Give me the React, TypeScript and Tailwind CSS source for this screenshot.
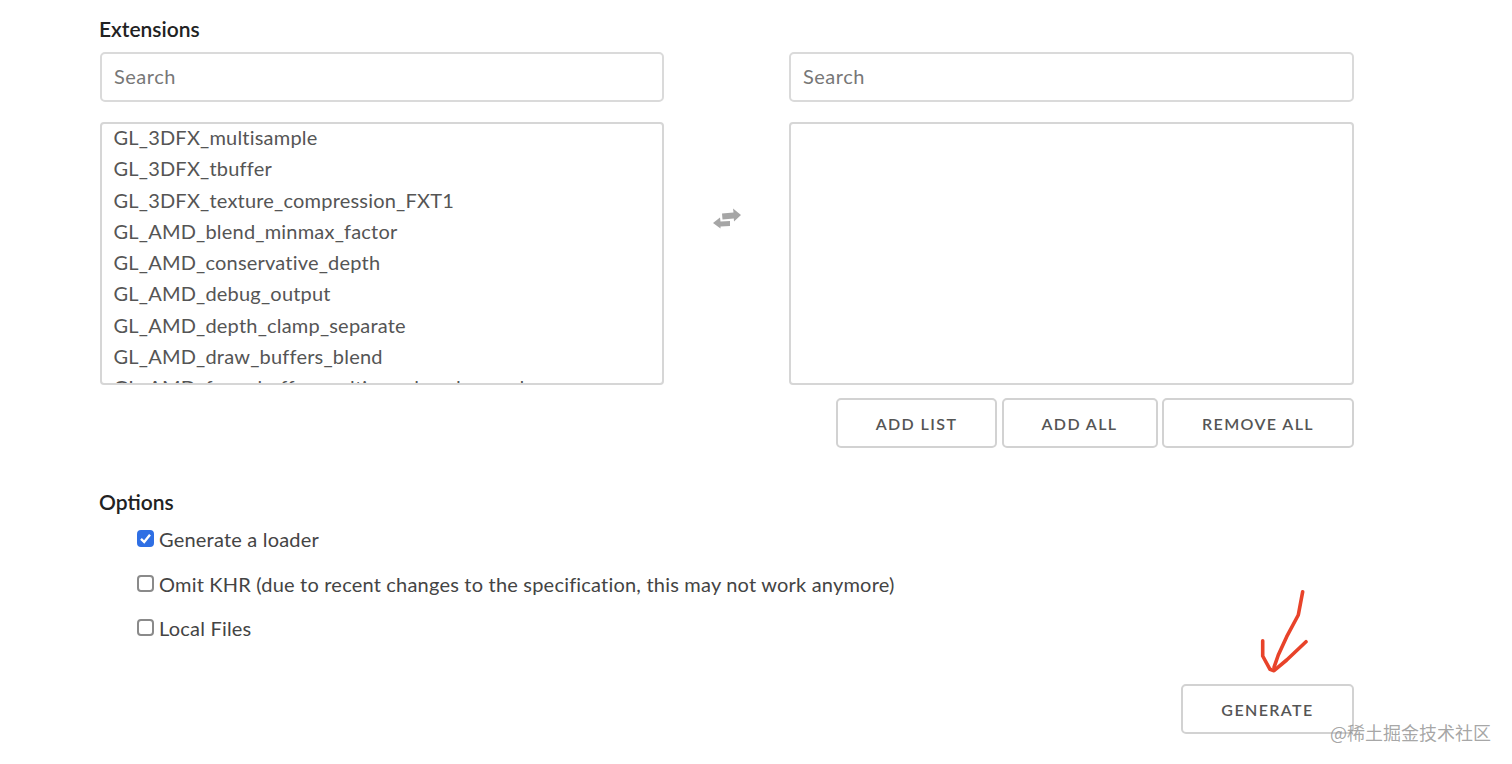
import React from "react";

const items = [
  "GL_3DFX_multisample",
  "GL_3DFX_tbuffer",
  "GL_3DFX_texture_compression_FXT1",
  "GL_AMD_blend_minmax_factor",
  "GL_AMD_conservative_depth",
  "GL_AMD_debug_output",
  "GL_AMD_depth_clamp_separate",
  "GL_AMD_draw_buffers_blend",
  "GL_AMD_framebuffer_multisample_advanced",
];

function Search() {
  return (
    <input
      placeholder="Search"
      className="block w-full h-[50px] rounded-[5px] border-2 border-[#dadada] bg-white pl-[12px] pr-[13px] pb-[2px] text-[20px] text-[#555] placeholder:text-[#777] outline-none tracking-[0.5px]"
    />
  );
}

function Btn({ children, className }: { children: React.ReactNode; className: string }) {
  return (
    <button className={"h-[50px] pt-[1px] rounded-[5px] border-2 border-[#d2d2d2] bg-white text-[16px] font-semibold tracking-[1.4px] text-[#555] " + className}>
      {children}
    </button>
  );
}

function Check({ label, checked }: { label: string; checked?: boolean }) {
  return (
    <label className="flex items-center h-[24px] text-[20px] text-[#444] tracking-[0.2px]">
      <span className="relative w-[17px] h-[17px] mr-[5px] -mt-[3px] shrink-0">
        <input
          type="checkbox"
          defaultChecked={checked}
          className={
            "appearance-none block w-[17px] h-[17px] rounded-[4px] border-2 " +
            (checked ? "bg-[#2f6fe4] border-[#2f6fe4]" : "bg-white border-[#8a8a8a]")
          }
        />
        {checked && (
          <svg viewBox="0 0 17 17" className="absolute inset-0 w-[17px] h-[17px] pointer-events-none">
            <path d="M4 8.8 L7.2 12 L13 4.8" fill="none" stroke="#fff" strokeWidth="2.4" />
          </svg>
        )}
      </span>
      <span className="-mt-[2px]">{label}</span>
    </label>
  );
}

export default function App() {
  return (
    <div className="relative h-[764px] overflow-hidden bg-white font-['Lato','Liberation_Sans',sans-serif]">
      <div className="ml-[100px] w-[1254px] pt-[17px]">
        <h2 className="-ml-px h-[24px] leading-[24px] text-[21px] font-semibold text-[#222]">Extensions</h2>

        <div className="mt-[11px] grid grid-cols-[564px_1fr_565px]">
          <Search />
          <div />
          <Search />

          <div className="mt-[20px] h-[263px] overflow-hidden rounded-[4px] border-2 border-[#d6d6d6] pl-[11.5px] pr-[12px] text-[20px] text-[#555] tracking-[0.2px]">
            {items.map((t) => (
              <div key={t} className="h-[31.3px] leading-[26px] whitespace-nowrap">
                {t}
              </div>
            ))}
          </div>
          <div className="mt-[20px] flex justify-center items-start pt-[74px] pr-[4px]">
            <svg viewBox="0 0 50 50" className="w-[50px] h-[50px]">
              <path d="M22 17.5 L33.5 16.5 L33 12.5 L41 19 L34 25.5 L33.8 22.5 L22.5 23.5 Z" fill="#a6a6a6" />
              <path d="M30 25 L20.5 25.5 L20 21.5 L13 27 L20.5 32.5 L20.5 30.5 L30 30 Z" fill="#a6a6a6" />
            </svg>
          </div>
          <div className="mt-[20px] h-[263px] rounded-[4px] border-2 border-[#d6d6d6]" />
        </div>

        <div className="mt-[13px] flex justify-end gap-[4.5px]">
          <Btn className="w-[161px]">ADD LIST</Btn>
          <Btn className="w-[156px]">ADD ALL</Btn>
          <Btn className="w-[192px]">REMOVE ALL</Btn>
        </div>

        <h2 className="-ml-px mt-[42px] h-[24px] leading-[24px] text-[21px] font-semibold text-[#222]">Options</h2>

        <div className="mt-[14px] ml-[37px] flex flex-col gap-[20.5px]">
          <Check label="Generate a loader" checked />
          <Check label="Omit KHR (due to recent changes to the specification, this may not work anymore)" />
          <Check label="Local Files" />
        </div>

        <div className="mt-[43px] flex justify-end">
          <Btn className="w-[173px]">GENERATE</Btn>
        </div>
      </div>

      <svg className="absolute left-[1255px] top-[585px] w-[60px] h-[95px]" viewBox="1255 585 60 95">
        <path
          d="M1302.7 591.7 L1298.3 615 L1286.7 636.7 L1278.3 655 L1274 667.3"
          fill="none"
          stroke="#e8432a"
          strokeWidth="3.6"
          strokeLinecap="round"
          strokeLinejoin="round"
        />
        <path
          d="M1262.7 640.7 L1262.7 656 L1270 669.3 L1274 670.7 L1286.7 660 L1306 641.7"
          fill="none"
          stroke="#e8432a"
          strokeWidth="3.6"
          strokeLinecap="round"
          strokeLinejoin="round"
        />
      </svg>

      <div className="absolute left-[1330px] top-[720px] text-[18px] leading-[24px] text-[#8f8f8f]/80 whitespace-nowrap font-['Noto_Sans_CJK_SC','Lato',sans-serif]">
        @稀土掘金技术社区
      </div>
    </div>
  );
}
